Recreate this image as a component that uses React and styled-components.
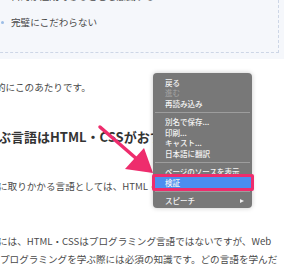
import React from "react";
import styled, { createGlobalStyle, css } from "styled-components";

const Global = createGlobalStyle`
  html, body {
    margin: 0;
    padding: 0;
    background: #fff;
  }
  body {
    font-family: "Noto Sans CJK JP", "Noto Sans", sans-serif;
  }
`;

const Page = styled.div`
  position: relative;
  width: 300px;
  height: 264px;
  overflow: hidden;
  background: #fff;
`;

const Column = styled.div`
  margin-left: -30px;
  width: 314px;
  color: #4a4a4a;
`;

const NoteBox = styled.div`
  margin-top: -15px;
  padding: 0 5px 6px 0;
  background: #f5f7fb;
`;

const NoteInner = styled.ul`
  list-style: none;
  margin: 0;
  padding: 1px 0 21px 30px;
  border: 1px dashed #cdd6e6;
`;

const NoteItem = styled.li`
  display: flex;
  align-items: center;
  gap: 7px;
  height: 18px;
  font-size: 9.6px;
  white-space: nowrap;
  & + & {
    margin-top: 8px;
  }
`;

const Dot = styled.span`
  width: 3px;
  height: 3px;
  border-radius: 50%;
  background: #9dbde6;
  flex-shrink: 0;
`;

const Line = styled.p`
  margin: ${(p) => p.$gap}px 0 0;
  padding-left: 28px;
  font-size: 9.6px;
  line-height: 18px;
  white-space: nowrap;
  text-indent: ${(p) => p.$indent || 0}px;
`;

const Heading = styled.h2`
  margin: 31px 0 0;
  padding-left: 30px;
  font-size: 13px;
  line-height: 20px;
  font-weight: 700;
  color: #333;
  white-space: nowrap;
  text-indent: -15px;
`;

const Menu = styled.div`
  position: absolute;
  left: 153px;
  top: 73px;
  width: 99px;
  padding: 4px 0 2px;
  box-sizing: border-box;
  background: #787878;
  border-radius: 4px;
  box-shadow: 0 0 5px rgba(0, 0, 0, 0.22);
  font-size: 7.5px;
  font-weight: 500;
  color: #f4f4f4;
`;

const Item = styled.div`
  position: relative;
  display: flex;
  align-items: center;
  justify-content: space-between;
  height: 10.5px;
  padding: 0 8px 0 12px;
  white-space: nowrap;
  ${(p) =>
    p.$disabled &&
    css`
      color: #9e9e9e;
    `}
  ${(p) =>
    p.$selected &&
    css`
      background: #4b8ef0;
      &::after {
        content: "";
        position: absolute;
        left: -1px;
        right: -2px;
        top: -3px;
        bottom: -3.5px;
        border: 3.5px solid #ee2d6d;
        border-radius: 2px;
      }
    `}
`;

const Separator = styled.div`
  height: 8px;
  display: flex;
  align-items: center;
  padding: 0 2px;
  &::before {
    content: "";
    flex: 1;
    height: 1px;
    background: rgba(255, 255, 255, 0.28);
  }
`;

const SubArrow = styled.span`
  width: 0;
  height: 0;
  border-top: 2.5px solid transparent;
  border-bottom: 2.5px solid transparent;
  border-left: 4px solid #eee;
`;

const Pointer = styled.svg`
  position: absolute;
  left: 0;
  top: 0;
  pointer-events: none;
`;

export default function App() {
  return (
    <Page>
      <Global />
      <Column>
        <NoteBox>
          <NoteInner>
            <NoteItem>
              <Dot />
              目的が達成できることを意識する
            </NoteItem>
            <NoteItem>
              <Dot />
              完璧にこだわらない
            </NoteItem>
          </NoteInner>
        </NoteBox>
        <Line $gap={19} $indent={-2}>
          的にこのあたりです。
        </Line>
        <Heading>学ぶ言語はHTML・CSSがおすすめ</Heading>
        <Line $gap={30}>に取りかかる言語としては、HTML・CSSがおすすめです。</Line>
        <Line $gap={37}>
          には、HTML・CSSはプログラミング言語ではないですが、Web
        </Line>
        <Line $gap={0} $indent={2}>
          プログラミングを学ぶ際には必須の知識です。どの言語を学んだ
        </Line>
      </Column>

      <Pointer width="300" height="264" viewBox="0 0 300 264">
        <line
          x1="100"
          y1="127"
          x2="138"
          y2="160"
          stroke="#ee2d6d"
          strokeWidth="3.5"
          strokeLinecap="round"
        />
        <polygon points="153,173 125,169 144,148" fill="#ee2d6d" />
      </Pointer>

      <Menu>
        <Item>戻る</Item>
        <Item $disabled>進む</Item>
        <Item>再読み込み</Item>
        <Separator />
        <Item>別名で保存...</Item>
        <Item>印刷...</Item>
        <Item>キャスト...</Item>
        <Item>日本語に翻訳</Item>
        <Separator />
        <Item>ページのソースを表示</Item>
        <Item $selected>検証</Item>
        <Separator />
        <Item>
          スピーチ
          <SubArrow />
        </Item>
      </Menu>
    </Page>
  );
}
